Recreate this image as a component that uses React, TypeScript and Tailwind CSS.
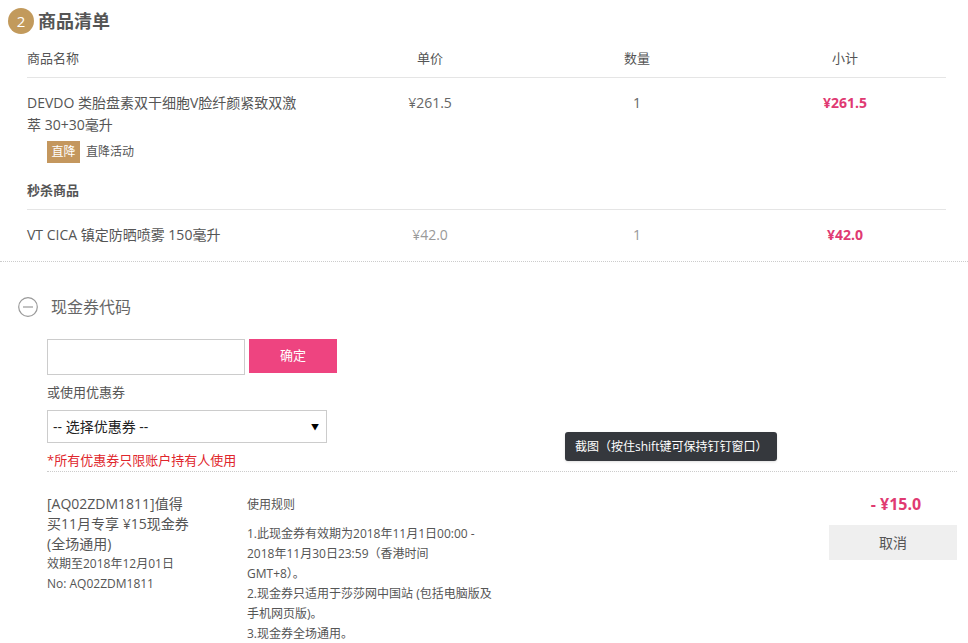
import { useState } from "react";

const font = { fontFamily: '"Open Sans", "Noto Sans CJK SC", sans-serif' };

const items = [
  {
    name: ["DEVDO 类胎盘素双干细胞V脸纤颜紧致双激", "萃 30+30毫升"],
    price: "¥261.5",
    qty: 1,
    total: "¥261.5",
  },
];

export default function App() {
  const [code, setCode] = useState("");

  return (
    <div className="relative w-[968px] h-[643px] overflow-hidden bg-white text-[#555]" style={font}>
      {/* title */}
      <div className="flex items-center gap-[4px] pl-[8px] pt-[8px] h-[34px]">
        <span className="flex h-[26px] w-[26px] items-center justify-center rounded-full bg-[#c29a5c] text-[15px] text-white">2</span>
        <h2 className="text-[18px] font-bold text-[#555]">商品清单</h2>
      </div>

      {/* table */}
      <div className="ml-[27px] mr-[22px] mt-[6px]">
        <div className="grid grid-cols-[303px_200px_214px_1fr] h-[38px] items-center border-b border-[#e5e5e5] text-[13px]">
          <span>商品名称</span>
          <span className="text-center">单价</span>
          <span className="text-center">数量</span>
          <span className="text-center">小计</span>
        </div>

        {items.map((it) => (
          <div key={it.price} className="grid grid-cols-[303px_200px_214px_1fr] pt-[14px] text-[14px]">
            <div>
              <p className="leading-[22px]">
                {it.name[0]}
                <br />
                {it.name[1]}
              </p>
              <div className="mt-[5px] ml-[20px] flex items-center gap-[6px]">
                <span className="flex h-[22px] w-[33px] items-center justify-center bg-[#c4975e] text-[12px] text-white">直降</span>
                <span className="text-[12px]">直降活动</span>
              </div>
            </div>
            <span className="text-center leading-[22px] text-[#666]">{it.price}</span>
            <span className="text-center leading-[22px] text-[#666]">{it.qty}</span>
            <span className="text-center leading-[22px] font-bold text-[#e03a72]">{it.total}</span>
          </div>
        ))}

        <div className="h-[47px] flex items-center border-b border-[#e5e5e5] pt-[9px]">
          <span className="text-[13px] font-bold">秒杀商品</span>
        </div>

        <div className="grid grid-cols-[303px_200px_214px_1fr] h-[51px] items-center pb-[2px] text-[14px]">
          <span>VT CICA 镇定防晒喷雾 150毫升</span>
          <span className="text-center text-[#999]">¥42.0</span>
          <span className="text-center text-[#999]">1</span>
          <span className="text-center font-bold text-[#e03a72]">¥42.0</span>
        </div>
      </div>

      <div className="border-t border-dotted border-[#ccc]" />

      {/* coupon code */}
      <div className="flex items-center gap-[13px] pl-[18px] mt-[33px]">
        <svg width="20" height="20" viewBox="0 0 20 20">
          <circle cx="10" cy="10" r="9.3" fill="none" stroke="#999" strokeWidth="1.2" />
          <line x1="5" y1="10" x2="15" y2="10" stroke="#999" strokeWidth="1.2" />
        </svg>
        <span className="text-[16px] text-[#666]">现金券代码</span>
      </div>

      <div className="pl-[47px] mt-[20px]">
        <div className="flex items-start gap-[4px]">
          <input
            value={code}
            onChange={(e) => setCode(e.target.value)}
            className="h-[36px] w-[198px] border border-[#ccc] px-2 text-[13px] outline-none"
          />
          <button className="h-[34px] w-[88px] bg-[#ee4480] text-[13px] text-white">确定</button>
        </div>
        <p className="mt-[8px] text-[13px] leading-[18px]">或使用优惠券</p>
        <div className="mt-[9px] flex h-[33px] w-[280px] items-center justify-between border border-[#ccc] pl-[5px] pr-[7px] text-[14px] text-[#222]">
          <span>-- 选择优惠券 --</span>
          <span className="text-[8px] text-black">▼</span>
        </div>
        <p className="mt-[8px] text-[13px] leading-[18px] text-[#e0262c]">*所有优惠券只限账户持有人使用</p>
      </div>

      <div className="ml-[47px] mr-[11px] mt-[2px] border-t border-dotted border-[#ccc]" />

      {/* applied coupon */}
      <div className="flex pl-[47px] pr-[11px] pt-[22px]">
        <div className="w-[200px]">
          <p className="text-[14px] leading-[20px]">
            [AQ02ZDM1811]值得
            <br />
            买11月专享 ¥15现金券
            <br />
            (全场通用)
          </p>
          <p className="text-[12px] leading-[20px]">效期至2018年12月01日</p>
          <p className="text-[12px] leading-[20px]">No: AQ02ZDM1811</p>
        </div>
        <div className="w-[250px] pt-[1px] text-[12px] leading-[20px]">
          <p>使用规则</p>
          <p className="mt-[9px]">
            1.此现金券有效期为2018年11月1日00:00 -<br />
            2018年11月30日23:59（香港时间<br />
            GMT+8）。<br />
            2.现金券只适用于莎莎网中国站 (包括电脑版及<br />
            手机网页版)。<br />
            3.现金券全场通用。
          </p>
        </div>
        <div className="ml-auto flex w-[128px] flex-col items-center">
          <span className="pl-[6px] text-[16px] font-bold leading-[20px] text-[#e03a72]">- ¥15.0</span>
          <button className="mt-[11px] h-[35px] w-[128px] bg-[#efefef] text-[14px] text-[#555]">取消</button>
        </div>
      </div>

      {/* screenshot tooltip */}
      <div className="absolute left-[565px] top-[432px] flex h-[29px] w-[212px] items-center rounded-[3px] bg-[#35383d] pl-[10px] text-[12px] text-white shadow">
        截图（按住shift键可保持钉钉窗口）
      </div>
    </div>
  );
}
